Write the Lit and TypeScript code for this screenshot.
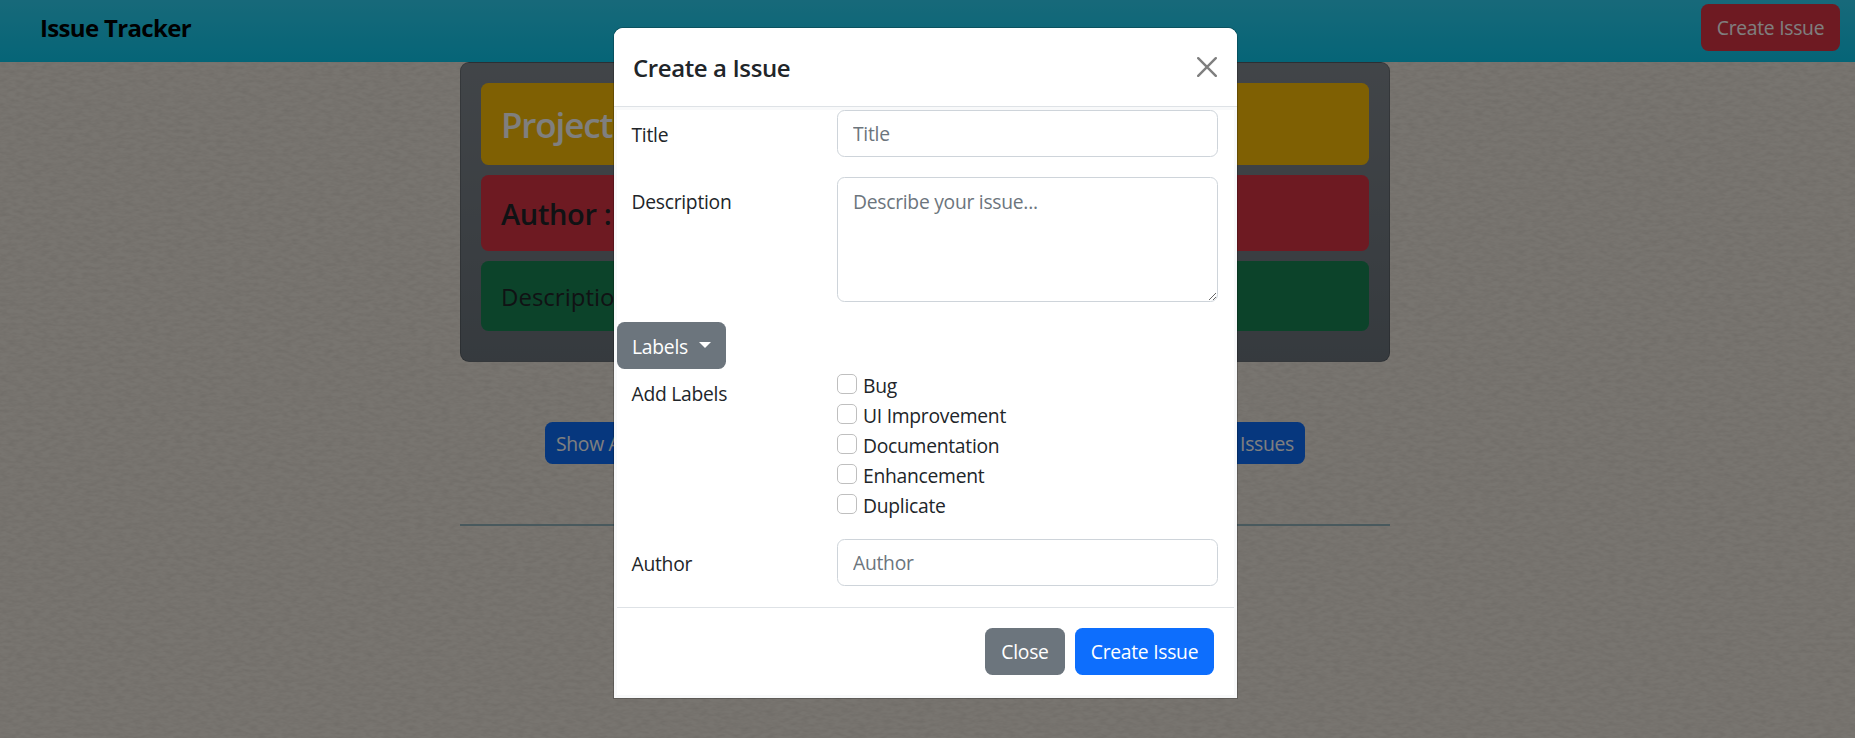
import { LitElement, html, css } from "lit";

const LABELS = ["Bug", "UI Improvement", "Documentation", "Enhancement", "Duplicate"];

class AppRoot extends LitElement {
  static styles = css`
    :host {
      display: block;
      position: relative;
      height: 738px;
      overflow: hidden;
      background: #f1eae0;
      color: #212529;
      font: 400 19.3px/30px "Open Sans", "Noto Sans", sans-serif;
      letter-spacing: -0.27px;
    }
    * { box-sizing: border-box; }
    .paper { position: absolute; inset: 0; width: 100%; height: 100%; }
    .page { position: relative; }
    .nav {
      height: 62px;
      padding: 4px 15px 9px 40px;
      display: flex;
      align-items: flex-start;
      justify-content: space-between;
      background: linear-gradient(180deg, #2fd3f4, #0bcaef);
    }
    .brand {
      font-size: 24px;
      font-weight: 700;
      letter-spacing: -0.66px;
      line-height: 38px;
      padding-top: 5px;
      color: #000;
    }
    .btn {
      font: inherit;
      letter-spacing: inherit;
      color: #fff;
      border: 0;
      border-radius: 7.5px;
      height: 47px;
      padding: 1px 0 0;
      display: flex;
      align-items: center;
      justify-content: center;
    }
    .danger { background: #dc3545; width: 139px; }
    .primary { background: #0d6efd; width: 139px; }
    .secondary { background: #6c757d; }
    .main { width: 930px; margin: 0 auto; position: relative; left: -2.5px; }
    .card {
      height: 300px;
      border: 1px solid rgba(0, 0, 0, 0.18);
      border-radius: 9px;
      padding: 20px;
      display: flex;
      flex-direction: column;
      gap: 10px;
      background: linear-gradient(180deg, #838a91, #6c757d);
    }
    .strip { border-radius: 7.5px; padding-left: 20px; color: #212529; white-space: nowrap; }
    .project { height: 82px; line-height: 84px; background: #ffc107; color: #fff; font-size: 35px; font-weight: 600; letter-spacing: -1.15px; }
    .author { height: 76px; line-height: 77px; background: #dc3545; font-size: 29px; font-weight: 600; letter-spacing: -0.35px; }
    .desc { height: 70px; line-height: 71px; background: #198754; font-size: 24px; letter-spacing: 0; }
    .actions { display: flex; justify-content: space-between; padding: 60px 85px 0; }
    .sm { height: 42px; width: 150px; padding: 2px 11px 0; justify-content: flex-start; }
    .sm.end { justify-content: flex-end; }
    .rule { height: 2px; margin-top: 60px; background: #93b3ba; }
    .shade { position: absolute; inset: 0; background: rgba(0, 0, 0, 0.5); }
    .modal {
      position: absolute;
      left: 614px;
      top: 28px;
      width: 623px;
      height: 670px;
      background: #f8f9fa;
      border-radius: 9px 9px 0 0;
      box-shadow: 0 0 0 1px rgba(0, 0, 0, 0.2);
      display: flex;
      flex-direction: column;
    }
    .head {
      height: 79px;
      flex: none;
      background: #fff;
      border-bottom: 1px solid #dee2e6;
      border-radius: 9px 9px 0 0;
      padding: 0 20px 0 19px;
      display: flex;
      align-items: center;
      justify-content: space-between;
    }
    .title { font-size: 24px; font-weight: 600; letter-spacing: -0.4px; padding-top: 2px; }
    .close { width: 20px; height: 20px; display: block; }
    .body {
      margin: 3px;
      flex: 1;
      background: #fff;
      display: flex;
      flex-direction: column;
      align-items: stretch;
    }
    .row { display: grid; grid-template-columns: 205.5px 381px; padding-left: 14.5px; margin-bottom: 20px; }
    .cap { padding-top: 10px; }
    .field {
      font: inherit;
      letter-spacing: inherit;
      color: #212529;
      width: 381px;
      height: 47px;
      padding: 8px 15px 8px;
      border: 1px solid #ced4da;
      border-radius: 7.5px;
      background: #fff;
      display: block;
      margin: 0;
    }
    .field::placeholder { color: #6c757d; opacity: 1; }
    .area { height: 125px; padding-top: 9px; resize: vertical; }
    .drop { width: 109px; gap: 11px; padding-top: 2px; }
    .caret { width: 12px; height: 6px; margin-top: -4px; display: block; }
    .checks { padding-top: 3px; height: 150px; display: flex; flex-direction: column; }
    .check { display: flex; flex: none; gap: 6px; height: 30px; line-height: 27px; }
    .box { appearance: none; width: 20px; height: 20px; margin: 2px 0 0; border: 1px solid #bfbfbf; border-radius: 5px; background: #fff; }
    .foot {
      border-top: 1px solid #dee2e6;
      margin-top: 1px;
      padding: 20px 20px 0;
      display: flex;
      justify-content: flex-end;
      gap: 10px;
    }
    .dismiss { width: 80px; }
  `;

  render() {
    return html`
      <svg class="paper" aria-hidden="true">
        <filter id="grain" x="0" y="0" width="100%" height="100%">
          <feTurbulence type="fractalNoise" baseFrequency="0.12 0.3" numOctaves="3" seed="7" />
          <feColorMatrix values="0 0 0 0 0.2  0 0 0 0 0.18  0 0 0 0 0.16  0.24 0 0 0 -0.08" />
        </filter>
        <rect width="100%" height="100%" filter="url(#grain)" />
      </svg>
      <div class="page">
        <header class="nav">
          <div class="brand">Issue Tracker</div>
          <button class="btn danger">Create Issue</button>
        </header>
        <main class="main">
          <section class="card">
            <div class="strip project">Project</div>
            <div class="strip author">Author :</div>
            <div class="strip desc">Description</div>
          </section>
          <div class="actions">
            <button class="btn primary sm">Show All</button>
            <button class="btn primary sm end">Issues</button>
          </div>
          <div class="rule"></div>
        </main>
      </div>
      <div class="shade"></div>
      <div class="modal" role="dialog">
        <div class="head">
          <div class="title">Create a Issue</div>
          <svg class="close" viewBox="0 0 20 20"><path d="M1.2 1.2 18.8 18.8M18.8 1.2 1.2 18.8" stroke="#7f7f7f" stroke-width="2.4" stroke-linecap="round" /></svg>
        </div>
        <div class="body">
          <div class="row">
            <label class="cap">Title</label>
            <input class="field" placeholder="Title" />
          </div>
          <div class="row">
            <label class="cap">Description</label>
            <textarea class="field area" placeholder="Describe your issue..."></textarea>
          </div>
          <button class="btn secondary drop">
            Labels
            <svg class="caret" viewBox="0 0 12 6"><path d="M0 0h12L6 6z" fill="#fff" /></svg>
          </button>
          <div class="row">
            <label class="cap">Add Labels</label>
            <div class="checks">
              ${LABELS.map((name) => html`<label class="check"><input class="box" type="checkbox" />${name}</label>`)}
            </div>
          </div>
          <div class="row">
            <label class="cap">Author</label>
            <input class="field" placeholder="Author" />
          </div>
          <div class="foot">
            <button class="btn secondary dismiss">Close</button>
            <button class="btn primary">Create Issue</button>
          </div>
        </div>
      </div>
    `;
  }
}
customElements.define("app-root", AppRoot);
